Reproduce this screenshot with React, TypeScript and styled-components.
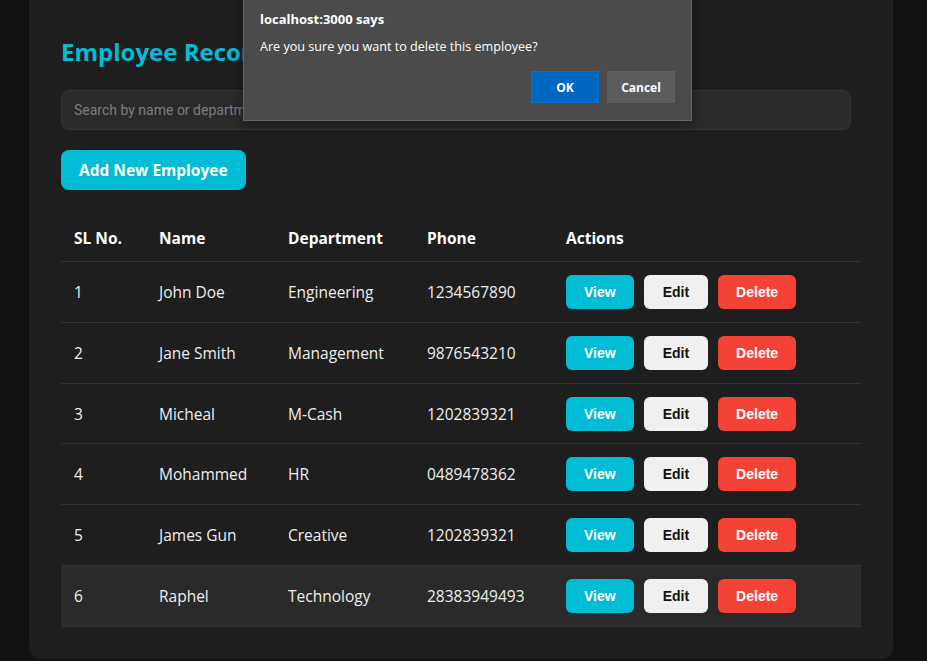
import React, { FunctionComponent, useState } from 'react';
import styled, { createGlobalStyle } from 'styled-components';

interface Employee {
    id: number;
    name: string;
    department: string;
    phone: string;
};

const employees: Employee[] = [
    { id: 1, name: 'John Doe', department: 'Engineering', phone: '1234567890' },
    { id: 2, name: 'Jane Smith', department: 'Management', phone: '9876543210' },
    { id: 3, name: 'Micheal', department: 'M-Cash', phone: '1202839321' },
    { id: 4, name: 'Mohammed', department: 'HR', phone: '0489478362' },
    { id: 5, name: 'James Gun', department: 'Creative', phone: '1202839321' },
    { id: 6, name: 'Raphel', department: 'Technology', phone: '28383949493' },
];

const GlobalStyle = createGlobalStyle`
    html, body {
        margin: 0;
        padding: 0;
        background-color: #121212;
        font-family: "Open Sans", "Noto Sans", sans-serif;
        color: #f0f0f0;
    }
`;

const Page = styled.div`
    position: relative;
    width: 927px;
    height: 661px;
    overflow: hidden;
`;

const Container = styled.div`
    width: 800px;
    margin-left: 29px;
    padding: 36px 32px 32px;
    background-color: #1e1e1e;
    border-radius: 0 0 12px 12px;
`;

const Title = styled.h2`
    margin: 0 0 22px;
    font-size: 24px;
    line-height: 32px;
    font-weight: 700;
    color: #00bcd4;
`;

const SearchInput = styled.input`
    display: block;
    box-sizing: border-box;
    width: 790px;
    height: 40px;
    padding: 0 12px;
    background-color: #2a2a2a;
    border: 1px solid #353535;
    border-radius: 8px;
    color: #eee;
    font-family: Roboto, "Liberation Sans", sans-serif;
    font-size: 14px;
    outline: none;

    &::placeholder {
        color: #7d7d7d;
    }
`;

const AddButton = styled.button`
    margin-top: 20px;
    height: 40px;
    padding: 0 18px;
    background-color: #00bcd4;
    border: none;
    border-radius: 8px;
    color: #fff;
    font-family: "Open Sans", "Noto Sans", sans-serif;
    font-size: 15.5px;
    font-weight: 700;
`;

const Table = styled.table`
    width: 800px;
    margin-top: 25px;
    border-collapse: collapse;
    table-layout: fixed;
`;

const HeadCell = styled.th`
    padding: 12px 13px;
    text-align: left;
    font-size: 15.5px;
    line-height: 22px;
    font-weight: 700;
    color: #fff;
    border-bottom: 1px solid #333;
`;

const Row = styled.tr<{ $active?: boolean }>`
    background-color: ${(p) => (p.$active ? '#2a2a2a' : 'transparent')};
`;

const Cell = styled.td`
    padding: 13px 13px 12.8px;
    height: 34px;
    font-size: 15.5px;
    color: #eee;
    border-bottom: 1px solid #333;
    white-space: nowrap;
`;

const Actions = styled.div`
    display: flex;
    gap: 10px;
`;

const ActionButton = styled.button<{ $variant: 'view' | 'edit' | 'delete' }>`
    height: 34px;
    padding: 0 ${(p) => (p.$variant === 'edit' ? '19px' : '18px')};
    border: none;
    border-radius: 6px;
    font-family: "Liberation Sans", Arial, sans-serif;
    font-size: 14px;
    font-weight: 700;
    background-color: ${(p) =>
        p.$variant === 'view' ? '#00bcd4' : p.$variant === 'edit' ? '#f0f0f0' : '#f44336'};
    color: ${(p) => (p.$variant === 'edit' ? '#111' : '#fff')};
`;

const Dialog = styled.div`
    position: absolute;
    top: -10px;
    left: 243px;
    width: 415px;
    padding: 19px 16px 17px 16px;
    background-color: #4b4b4b;
    border: 1px solid #646464;
    color: #fff;
    box-shadow: 0 4px 14px rgba(0, 0, 0, 0.35);
`;

const DialogTitle = styled.div`
    font-size: 13px;
    font-weight: 700;
    line-height: 18px;
`;

const DialogMessage = styled.div`
    margin-top: 10px;
    font-size: 12.6px;
    line-height: 18px;
`;

const DialogActions = styled.div`
    display: flex;
    justify-content: flex-end;
    gap: 8px;
    margin-top: 15px;
`;

const DialogButton = styled.button<{ $primary?: boolean }>`
    width: 68px;
    height: 32px;
    border: 1px solid ${(p) => (p.$primary ? '#0a6fc8' : '#5e5e5e')};
    background-color: ${(p) => (p.$primary ? '#0067c0' : '#5c5c5c')};
    color: #fff;
    font-family: "Open Sans", "Noto Sans", sans-serif;
    font-size: 12px;
    font-weight: 700;
`;

const App: FunctionComponent = () => {
    const [search, setSearch] = useState("");

    const filtered = employees.filter((e) =>
        (e.name + ' ' + e.department).toLowerCase().includes(search.toLowerCase())
    );

    return (
        <>
            <GlobalStyle />
            <Page>
                <Container>
                    <Title>Employee Records</Title>
                    <SearchInput
                        type="text"
                        placeholder="Search by name or department..."
                        value={search}
                        onChange={(e: React.ChangeEvent<HTMLInputElement>) => setSearch(e.target.value)}
                    />
                    <AddButton>Add New Employee</AddButton>
                    <Table>
                        <colgroup>
                            <col style={{ width: 85 }} />
                            <col style={{ width: 129 }} />
                            <col style={{ width: 139 }} />
                            <col style={{ width: 139 }} />
                            <col />
                        </colgroup>
                        <thead>
                            <tr>
                                <HeadCell>SL No.</HeadCell>
                                <HeadCell>Name</HeadCell>
                                <HeadCell>Department</HeadCell>
                                <HeadCell>Phone</HeadCell>
                                <HeadCell>Actions</HeadCell>
                            </tr>
                        </thead>
                        <tbody>
                            {filtered.map((emp) => (
                                <Row key={emp.id} $active={emp.id === 6}>
                                    <Cell>{emp.id}</Cell>
                                    <Cell>{emp.name}</Cell>
                                    <Cell>{emp.department}</Cell>
                                    <Cell>{emp.phone}</Cell>
                                    <Cell>
                                        <Actions>
                                            <ActionButton $variant="view">View</ActionButton>
                                            <ActionButton $variant="edit">Edit</ActionButton>
                                            <ActionButton $variant="delete">Delete</ActionButton>
                                        </Actions>
                                    </Cell>
                                </Row>
                            ))}
                        </tbody>
                    </Table>
                </Container>
                <Dialog>
                    <DialogTitle>localhost:3000 says</DialogTitle>
                    <DialogMessage>Are you sure you want to delete this employee?</DialogMessage>
                    <DialogActions>
                        <DialogButton $primary>OK</DialogButton>
                        <DialogButton>Cancel</DialogButton>
                    </DialogActions>
                </Dialog>
            </Page>
        </>
    );
};

export default App;
